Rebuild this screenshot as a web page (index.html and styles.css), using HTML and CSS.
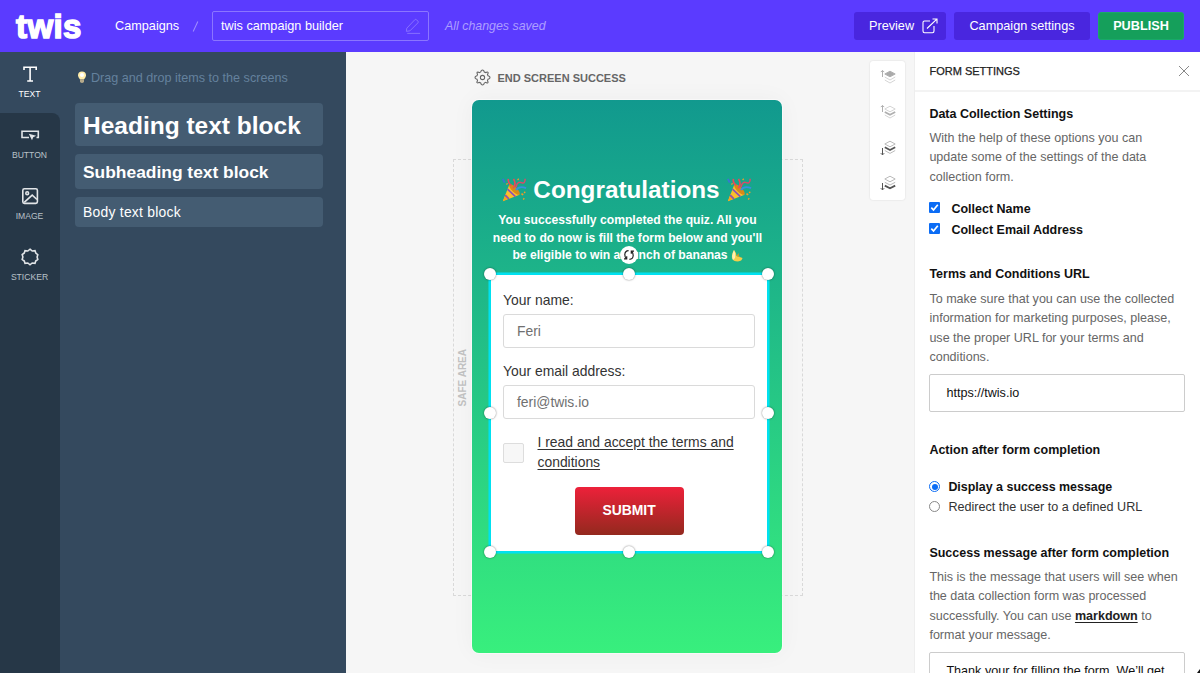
FILE: index.html
```html
<!DOCTYPE html>
<html lang="en">
<head>
<meta charset="utf-8">
<title>twis campaign builder</title>
<link rel="stylesheet" href="styles.css">
</head>
<body>
<svg class="defs" width="0" height="0" aria-hidden="true">
  <symbol id="gear" viewBox="0 0 24 24"><path d="M10.3 2.2Q12 .8 13.7 2.2L14.5 4.2L16.6 5.1L18.7 4.2Q20.2 4.1 19.9 6L19 7.7L19.8 9.6L21.8 10.4Q23.2 12 21.8 13.6L19.8 14.4L19 16.4L19.9 18.4Q19.8 20 18.2 19.8L16.5 18.9L14.5 19.8L13.7 21.8Q12 23.2 10.3 21.8L9.5 19.8L7.4 18.9L5.4 19.8Q3.9 19.8 4.1 18.2L5 16.4L4.2 14.4L2.2 13.6Q.8 12 2.2 10.4L4.2 9.6L5 7.6L4.1 5.6Q4.2 4.1 5.8 4.2L7.5 5.1L9.5 4.2Z"/><circle cx="12" cy="12" r="3"/></symbol>
  <symbol id="popper" viewBox="0 0 28 28">
    <path d="M2 26L9 8L20 19Z" fill="#fbbf2d"/><path d="M2 26L5 18L9.5 23Z" fill="#f5a51c"/>
    <path d="M7 13L15.5 21.2M4.4 19.5L8.6 23.7" stroke="#8e51b5" stroke-width="1.8" fill="none"/>
    <ellipse cx="14.5" cy="13.5" rx="2.8" ry="7.6" transform="rotate(-45 14.5 13.5)" fill="#d98916"/>
    <path d="M13 12Q17 8 13.5 2M11 9Q7 6 8 2" stroke="#e9495c" stroke-width="1.8" fill="none"/>
    <path d="M16 14Q20 9 27 12" stroke="#3790df" stroke-width="2" fill="none"/>
    <path d="M16 11Q18 4 22 6T26 2" stroke="#db4a69" stroke-width="1.6" fill="none"/>
    <path d="M2 2L4 6" stroke="#3975d5" stroke-width="2"/>
    <path d="M22 18l2 1M25 16l1 1M18 2l1 1M6 7l1 1M24 23l1 1" stroke="#f29b28" stroke-width="1.8"/>
  </symbol>
</svg>
<div class="app">
  <header class="topbar">
    <div class="logo">twis</div>
    <a class="crumb">Campaigns</a><span class="slash"></span>
    <div class="name-field"><span>twis campaign builder</span>
      <svg width="16" height="16" viewBox="0 0 18 18"><path d="M2 11.5L11 2Q12 1 13 2L14.5 3.5Q15.5 4.5 14.5 5.5L5.5 14.5L1.5 15ZM2.5 17.3H17"/></svg>
    </div>
    <em class="saved">All changes saved</em>
    <nav class="actions">
      <a class="btn preview">Preview <svg width="16" height="16" viewBox="0 0 16 16"><path d="M8 3H2.5Q1 3 1 4.5V13Q1 14.7 2.5 14.7H10.5Q12 14.7 12 13V8M5 10.5L14.8 1.2M10.5 1H15V5.5"/></svg></a>
      <a class="btn settings">Campaign settings</a>
      <a class="btn publish">PUBLISH</a>
    </nav>
  </header>
  <div class="workspace">
    <aside class="rail">
      <div class="tool active"><svg width="20" height="20" viewBox="0 0 20 20"><path d="M4 6V3.2H16.2V6M10.1 3.2V17M7.2 17H13"/></svg><span>TEXT</span></div>
      <div class="tool first"><svg width="20" height="20" viewBox="0 0 20 20"><path d="M9 12.5H2V6.2H18.3V12.5H16.5"/><path class="solid" d="M8.8 8.8L16.2 10.8L13.2 12.2L12 15.2Z"/></svg><span>BUTTON</span></div>
      <div class="tool"><svg width="20" height="20" viewBox="0 0 20 20"><rect x="2.8" y="2.8" width="14.6" height="14.6" rx="1.6"/><circle cx="7.2" cy="7.2" r="1.4"/><path d="M4.2 16.4L12.2 9.1L17 13.5"/></svg><span>IMAGE</span></div>
      <div class="tool"><svg width="20" height="20" viewBox="0 0 20 20"><path d="M10 2.2L12.2 4L15 3.6L15.8 6.1L17.8 7.7L17.1 10L17.8 12.5L15.7 14L15 16.4L12.2 16L10 17.8L7.8 16L5 16.4L4.3 14L2.2 12.4L2.9 10L2.2 7.6L4.3 6L5 3.6L7.8 4Z"/></svg><span>STICKER</span></div>
      <div class="rail-fill"></div>
    </aside>
    <aside class="blocks">
      <p class="tip"><svg width="10" height="13" viewBox="0 0 10 13"><path d="M1 4.6a4 4 0 0 1 8 0Q9 6.2 7 8.6H3Q1 6.2 1 4.6Z" fill="#ffedac"/><path d="M3 8.5H7V11Q5 13 3 11Z" fill="#b5a98a"/><circle cx="5" cy="4" r="2" fill="#fff"/></svg>Drag and drop items to the screens</p>
      <div class="block heading">Heading text block</div>
      <div class="block sub">Subheading text block</div>
      <div class="block body">Body text block</div>
    </aside>
    <main class="canvas">
      <div class="stage">
        <div class="safe"><span>SAFE AREA</span></div>
        <div class="screen-title"><svg width="17" height="17"><use href="#gear"/></svg>END SCREEN SUCCESS</div>
        <section class="screen">
          <h1><svg width="26" height="26"><use href="#popper"/></svg><span>Congratulations</span><svg width="26" height="26"><use href="#popper"/></svg></h1>
          <div class="message">
            <div>You successfully completed the quiz. All you</div>
            <div>need to do now is fill the form below and you'll</div>
            <div>be eligible to win a bunch of bananas<svg width="12" height="12" viewBox="0 0 12 12"><path d="M3 0Q5 2 5.5 6Q8 6.5 11.5 8Q11 11 7 11.5Q2 11.5 1 8Q.5 4 3 0Z" fill="#f3cf4a"/><path d="M3 0Q5 4 4 8L2 10Q0 6 3 0Z" fill="#fff0b3"/><path d="M5.5 6L7.5 3L8 6.5L11 8Z" fill="#d99a25"/></svg></div>
          </div>
          <div class="form">
            <label>Your name:</label>
            <div class="input">Feri</div>
            <label>Your email address:</label>
            <div class="input">feri@twis.io</div>
            <div class="terms"><i></i><span>I read and accept the terms and<br>conditions</span></div>
            <div class="submit">SUBMIT</div>
            <b class="handle tl"></b><b class="handle tc"></b><b class="handle tr"></b>
            <b class="handle ml"></b><b class="handle mr"></b>
            <b class="handle bl"></b><b class="handle bc"></b><b class="handle br"></b>
            <div class="rotate"><svg width="12" height="12" viewBox="0 0 12 12"><path d="M5.6 1.6Q2 1.8 1.8 5.5Q1.8 8 3.3 9.6M1 9.9H3.7V7.2M6.4 10.4Q10 10.2 10.2 6.5Q10.2 4 8.7 2.4M11 2.1H8.3V4.8"/></svg></div>
          </div>
        </section>
      </div>
      <div class="layers">
        <svg class="dim" width="18" height="18" viewBox="0 0 18 18"><path d="M3.5 9V2.5M1.8 4.1L3.5 2.4L5.2 4.1"/><path class="fill" d="M5.8 6L11 3.2L16.2 6L11 8.8Z"/><path class="pale" d="M5.8 9L11 12L16.2 9M5.8 12L11 15L16.2 12"/></svg>
        <svg class="dim" width="18" height="18" viewBox="0 0 18 18"><path d="M3.5 9V2.5M1.8 4.1L3.5 2.4L5.2 4.1"/><path class="pale" d="M5.8 6L11 3.2L16.2 6L11 8.8ZM5.8 12L11 15L16.2 12"/><path class="thick" d="M5.8 9L11 11.7L16.2 9"/></svg>
        <svg width="18" height="18" viewBox="0 0 18 18"><path d="M3.5 9V15.8M1.8 14.2L3.5 15.9L5.2 14.2"/><path class="pale" d="M5.8 5L11 2.2L16.2 5L11 7.8ZM5.8 11.5L11 14.4L16.2 11.5"/><path class="thick" d="M5.8 8.3L11 11L16.2 8.3"/></svg>
        <svg width="18" height="18" viewBox="0 0 18 18"><path d="M3.5 9V15.8M1.8 14.2L3.5 15.9L5.2 14.2"/><path class="pale" d="M5.8 5L11 2.2L16.2 5L11 7.8ZM5.8 8.3L11 11L16.2 8.3"/><path class="thick" d="M5.8 11.6L11 14.3L16.2 11.6"/></svg>
      </div>
    </main>
    <aside class="inspector">
      <div class="inspector-head"><span>FORM SETTINGS</span><svg width="12" height="12" viewBox="0 0 12 12"><path d="M1 1L11 11M11 1L1 11"/></svg></div>
      <div class="inspector-body">
        <section class="data">
          <h2>Data Collection Settings</h2>
          <p>With the help of these options you can<br>update some of the settings of the data<br>collection form.</p>
          <div class="check"><svg width="11" height="11" viewBox="0 0 11 11"><path d="M2.3 5.7L4.5 8L8.8 2.7"/></svg>Collect Name</div>
          <div class="check"><svg width="11" height="11" viewBox="0 0 11 11"><path d="M2.3 5.7L4.5 8L8.8 2.7"/></svg>Collect Email Address</div>
        </section>
        <section class="url">
          <h2>Terms and Conditions URL</h2>
          <p>To make sure that you can use the collected<br>information for marketing purposes, please,<br>use the proper URL for your terms and<br>conditions.</p>
          <div class="field">https://twis.io</div>
        </section>
        <section class="action">
          <h2>Action after form completion</h2>
          <div class="radio on"><i></i>Display a success message</div>
          <div class="radio"><i></i>Redirect the user to a defined URL</div>
        </section>
        <section class="success">
          <h2>Success message after form completion</h2>
          <p>This is the message that users will see when<br>the data collection form was processed<br>successfully. You can use <a>markdown</a> to<br>format your message.</p>
          <div class="field">Thank your for filling the form. We’ll get</div>
        </section>
      </div>
    </aside>
  </div>
  <svg class="cursor" width="3" height="4" viewBox="0 0 3 4"><path d="M3 0V4H0Z" fill="#111"/></svg>
</div>
</body>
</html>
```
FILE: styles.css
```css
* { box-sizing: border-box; }
body { margin: 0; font-family: "Liberation Sans", Arial, sans-serif; font-size: 12.6px; color: #111; }
svg { fill: none; flex: none; display: block; }
.defs { position: absolute; }
.app { position: relative; width: 1200px; height: 673px; overflow: hidden; display: flex; flex-direction: column; }

.topbar { height: 52px; flex: none; background: #5b3bff; color: #fff; display: flex; align-items: center; padding: 0 16px 0 15px; font-size: 12.7px; }
.logo { width: 100px; padding-left: 1px; font-weight: bold; font-size: 33px; line-height: 49px; -webkit-text-stroke: 1.5px #fff; letter-spacing: .4px; }
.crumb { width: 77px; }
.slash { width: 1px; height: 11px; background: #a18eff; transform: rotate(25deg); margin: 0 17px 0 3px; }
.name-field { width: 217px; height: 30px; border: 1px solid #8b75ff; border-radius: 2px; display: flex; align-items: center; justify-content: space-between; padding: 0 7px 0 8px; margin-left: -1px; }
.name-field svg { stroke: #8d77ff; stroke-width: 1; }
.saved { margin-left: 16px; color: #ad9eff; font-size: 12.4px; }
.actions { margin-left: auto; display: flex; gap: 8px; }
.btn { height: 28px; background: #4926df; border-radius: 3px; display: flex; align-items: center; justify-content: center; }
.preview { width: 92px; gap: 8px; padding-left: 7px; }
.preview svg { stroke: #fff; stroke-width: 1.1; }
.settings { width: 136px; }
.publish { width: 86px; background: #159f5b; font-weight: bold; border: 1px solid #19a96a; }

.workspace { flex: 1; min-height: 0; display: flex; background: #34495e; }
.rail { width: 60px; display: flex; flex-direction: column; }
.tool { height: 61px; padding: 12px 1px 0 0; background: #263747; display: flex; flex-direction: column; align-items: center; gap: 5px; font-size: 8.6px; line-height: 10px; color: #b9c1c8; flex: none; }
.tool svg { stroke: #e2e5e8; stroke-width: 1.6; }
.tool .solid { fill: #e2e5e8; stroke: none; }
.tool.active { background: none; color: #fff; }
.tool.active svg { stroke: #fff; }
.tool.first { border-top-right-radius: 8px; }
.rail-fill { flex: 1; background: #263747; }
.blocks { width: 286px; padding: 17px 23px 0 15px; }
.tip { margin: 0 0 17px 2px; display: flex; align-items: center; gap: 4px; height: 17px; color: #64819d; }
.block { background: #445c72; color: #fff; border-radius: 4px; padding-left: 8px; display: flex; align-items: center; margin-bottom: 8px; }
.heading { height: 43px; font-size: 24.5px; font-weight: bold; padding-top: 3px; }
.sub { height: 35px; font-size: 17.4px; font-weight: bold; padding-top: 2px; }
.body { height: 30px; font-size: 13.9px; letter-spacing: .25px; }

.canvas { width: 568px; background: #f6f6f6; display: flex; justify-content: space-between; align-items: flex-start; padding: 8px 8px 0 107px; }
.stage { position: relative; width: 350px; padding: 9px 0 0 18.5px; }
.safe { position: absolute; left: 0; top: 99px; width: 350px; height: 437px; border: 1px dashed #d9d9d9; display: flex; align-items: center; }
.safe span { writing-mode: vertical-rl; transform: rotate(180deg); color: #c2c2c2; font-size: 10px; font-weight: bold; line-height: 18px; }
.screen-title { height: 17px; display: flex; align-items: center; gap: 7px; padding-left: 2px; color: #666; font-size: 11px; font-weight: bold; }
.screen-title svg { stroke: #666; stroke-width: 1.5; }
.screen { position: relative; width: 310px; height: 553px; margin-top: 13.5px; border-radius: 7px; background: linear-gradient(#11998e, #38ef7d); box-shadow: 0 0 0 1px #fff8, 0 0 24px #0000000b; color: #fff; padding-top: 74.5px; }
.screen h1 { margin: 0; height: 31px; display: flex; align-items: center; justify-content: center; gap: 6px; font-size: 24.3px; }
.message { height: 68px; padding: 7px 0 0 2px; font-size: 12.15px; font-weight: bold; line-height: 17.5px; }
.message div { display: flex; justify-content: center; align-items: center; gap: 3px; white-space: pre; }
.form { position: relative; width: 280px; height: 280px; margin-left: 17.5px; border: 2px solid #00e1f0; outline: 1px solid #00e1f088; background: #fff; padding: 15px 12px 0; color: #333; font-size: 13.9px; }
.form label { display: block; height: 23.5px; line-height: 20px; }
.input { height: 34.5px; border: 1px solid #dadada; border-radius: 3px; padding-left: 13px; display: flex; align-items: center; color: #707070; margin-bottom: 13px; }
.terms { display: flex; align-items: center; gap: 14px; line-height: 20px; text-decoration: underline; text-underline-offset: 2px; }
.terms i { width: 20.5px; height: 20.5px; border: 1px solid #ddd; border-radius: 2px; background: #f7f7f7; margin-top: 2px; }
.submit { width: 109px; height: 48px; margin: 15px auto 0; border-radius: 4px; background: linear-gradient(#ed213a, #93291e); color: #fff; font-weight: bold; display: flex; align-items: center; justify-content: center; padding-bottom: 2px; }
.handle { position: absolute; width: 12px; height: 12px; border-radius: 50%; background: #fff; box-shadow: 0 0 2px #0008; transform: translate(-50%, -50%); }
.tl, .tc, .tr { top: -1px; } .ml, .mr { top: 50%; } .bl, .bc, .br { top: calc(100% + 1px); }
.tl, .ml, .bl { left: -1px; } .tc, .bc { left: 50%; } .tr, .mr, .br { left: calc(100% + 1px); }
.rotate { position: absolute; left: 50%; top: -20px; width: 18px; height: 18px; transform: translate(-50%, -50%); border-radius: 50%; background: #fff; display: flex; align-items: center; justify-content: center; }
.rotate svg { stroke: #222; stroke-width: 1.2; }
.layers { width: 35px; height: 139px; margin: 1px 1px 0 0; background: #fff; border-radius: 3px; box-shadow: 0 0 2px #0002; padding: 7px 0 8px; display: flex; flex-direction: column; align-items: center; justify-content: space-between; }
.layers svg { stroke: #555; stroke-width: 1; }
.layers .dim { stroke: #b0b0b0; }
.layers .pale { stroke: #bbb; }
.layers .dim .pale { stroke: #d5d5d5; }
.layers .fill { fill: #aaa; }
.layers .thick { stroke-width: 1.8; }

.inspector { width: 286px; background: #fff; border-left: 1px solid #eee; }
.inspector-head { height: 40px; border-bottom: 2px solid #f3f3f3; padding: 0 10px 0 14.5px; display: flex; align-items: center; justify-content: space-between; font-size: 11px; color: #222; -webkit-text-stroke: .25px #222; }
.inspector-head svg { stroke: #888; stroke-width: 1; }
.inspector-body { padding: 13px 15px 0 14.4px; white-space: nowrap; }
.inspector h2 { margin: 0; font-size: 12.5px; line-height: 18px; }
.inspector p { margin: 6px 0 0; font-size: 12.55px; line-height: 19.3px; color: #666; }
.inspector p a { font-weight: bold; color: #222; text-decoration: underline; text-underline-offset: 2px; }
.data { height: 160px; }
.url { height: 176px; }
.action { height: 103px; }
.inspector .data p { margin-bottom: 11.5px; }
.inspector .url p { margin-top: 7px; }
.check { height: 21px; display: flex; align-items: center; gap: 11px; font-weight: bold; font-size: 12.5px; }
.check svg { background: #0b6cf5; border-radius: 1px; stroke: #fff; stroke-width: 1.7; margin-bottom: 2px; }
.field { height: 38px; margin-top: 7px; border: 1px solid #ccc; border-radius: 2px; padding-left: 16px; display: flex; align-items: center; }
.radio { height: 20px; display: flex; align-items: center; gap: 8px; color: #333; }
.radio.on { margin-top: 18px; font-weight: bold; font-size: 12.45px; color: #111; }
.radio i { width: 11px; height: 11px; border: 1px solid #888; border-radius: 50%; padding: 1.5px; margin-bottom: 2px; }
.radio.on i { border-color: #0b6cf5; background: #0b6cf5 content-box; }
.cursor { position: absolute; right: 0; bottom: 0; }
```
